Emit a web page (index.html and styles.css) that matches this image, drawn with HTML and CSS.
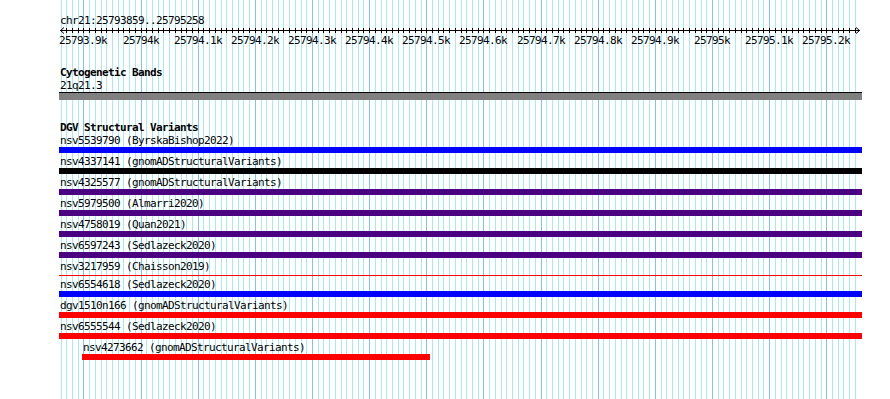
FILE: index.html
```html
<!DOCTYPE html>
<html>

<head>
	<title>chr21:25793859..25795258</title>
	<link rel="stylesheet" href="styles.css">
</head>

<body>
	<div class="browser">
		<div class="gridlines" id="gridlines"></div>
		<div class="tracks">
			<div class="locus">chr21:25793859..25795258</div>
			<svg class="ruler" id="ruler" width="803" height="8"></svg>
			<div class="ruler-labels" id="ruler-labels"></div>

			<div class="track track-bands">
				<div class="track-title">Cytogenetic Bands</div>
				<div class="feature-label">21q21.3</div>
				<div class="band"></div>
			</div>

			<div class="track track-dgv">
				<div class="track-title">DGV Structural Variants</div>
				<div class="feature">
					<div class="feature-label">nsv5539790 (ByrskaBishop2022)</div>
					<div class="feature-bar bar-blue"></div>
				</div>
				<div class="feature">
					<div class="feature-label">nsv4337141 (gnomADStructuralVariants)</div>
					<div class="feature-bar bar-black"></div>
				</div>
				<div class="feature">
					<div class="feature-label">nsv4325577 (gnomADStructuralVariants)</div>
					<div class="feature-bar bar-purple"></div>
				</div>
				<div class="feature">
					<div class="feature-label">nsv5979500 (Almarri2020)</div>
					<div class="feature-bar bar-purple"></div>
				</div>
				<div class="feature">
					<div class="feature-label">nsv4758019 (Quan2021)</div>
					<div class="feature-bar bar-purple"></div>
				</div>
				<div class="feature">
					<div class="feature-label">nsv6597243 (Sedlazeck2020)</div>
					<div class="feature-bar bar-purple"></div>
				</div>
				<div class="feature">
					<div class="feature-label">nsv3217959 (Chaisson2019)</div>
					<div class="feature-bar bar-line"></div>
				</div>
				<div class="feature">
					<div class="feature-label">nsv6554618 (Sedlazeck2020)</div>
					<div class="feature-bar bar-blue"></div>
				</div>
				<div class="feature">
					<div class="feature-label">dgv1510n166 (gnomADStructuralVariants)</div>
					<div class="feature-bar bar-red"></div>
				</div>
				<div class="feature">
					<div class="feature-label">nsv6555544 (Sedlazeck2020)</div>
					<div class="feature-bar bar-red"></div>
				</div>
				<div class="feature" style="margin-left: 23px; width: 348px;">
					<div class="feature-label">nsv4273662 (gnomADStructuralVariants)</div>
					<div class="feature-bar bar-red"></div>
				</div>
			</div>
		</div>
	</div>
	<script src="script.js"></script>
</body>

</html>
```

FILE: styles.css
```css
body {
	margin: 0;
	padding: 0;
	background-color: #fff;
	color: #000;
	font-family: "DejaVu Sans Mono", "Liberation Mono", monospace;
	font-size: 11px;
	letter-spacing: -0.62px;
	line-height: 12px;
}

.browser {
	position: relative;
	width: 890px;
	height: 399px;
	overflow: hidden;
}

/* grid lines sit behind the tracks */
.gridlines {
	position: absolute;
	top: 0;
	bottom: 0;
	left: 59px;
	width: 803px;
}

.gridline {
	position: absolute;
	top: 0;
	bottom: 0;
	width: 1px;
	background-color: #aae9f0;
}

.gridline-major {
	background-color: #84c2ec;
}

.tracks {
	position: relative;
	width: 803px;
	padding: 15px 0 0 59px;
}

.locus,
.feature-label {
	padding-left: 1px;
}

.ruler {
	display: block;
}

.ruler-labels {
	position: relative;
	height: 12px;
}

.ruler-label {
	position: absolute;
	top: 0;
	transform: translateX(-50%);
	white-space: nowrap;
}

.track-title {
	font-weight: bold;
	padding-left: 1px;
}

.feature-label {
	white-space: nowrap;
}

.track-bands {
	margin-top: 20px;
}

.track-bands .feature-label {
	margin-top: 1px;
}

.band {
	height: 7px;
	border-top: 1px solid #000;
	background-color: #808080;
}

.track-dgv {
	margin-top: 22px;
}

.track-dgv .track-title {
	margin-bottom: 1px;
}

.feature {
	margin-bottom: 3px;
}

.feature-bar {
	height: 6px;
}

.bar-blue {
	background-color: #0000ff;
}

.bar-black {
	background-color: #000;
}

.bar-purple {
	background-color: #4b0082;
}

.bar-red {
	background-color: #ff0000;
}

.bar-line {
	height: 1px;
	margin: 2px 0 3px;
	background-color: #ff0000;
}
```

FILE: script.js
```js
const start = 25793859;
const end = 25795258;
const scale = 800 / (end - start + 1);
const offset = 1;

const gridlines = document.querySelector('#gridlines');
const ruler = document.querySelector('#ruler');
const rulerLabels = document.querySelector('#ruler-labels');
const svgNS = 'http://www.w3.org/2000/svg';

const toX = (bp) => Math.round(offset + (bp - start) * scale);

const svgLine = (x1, y1, x2, y2) => {
	const line = document.createElementNS(svgNS, 'line');
	line.setAttribute('x1', x1);
	line.setAttribute('y1', y1);
	line.setAttribute('x2', x2);
	line.setAttribute('y2', y2);
	line.setAttribute('stroke', '#000');
	line.setAttribute('shape-rendering', 'crispEdges');
	ruler.appendChild(line);
};

// ruler axis with arrows at both ends
svgLine(1, 3.5, 801, 3.5);
const arrows = document.createElementNS(svgNS, 'path');
arrows.setAttribute('d', 'M5,0.5 L1.5,3.5 L5,6.5 M797,0.5 L800.5,3.5 L797,6.5');
arrows.setAttribute('stroke', '#000');
arrows.setAttribute('fill', 'none');
ruler.appendChild(arrows);

for (let bp = 25793860; bp <= end; bp += 10) {
	const x = toX(bp);

	const gridline = document.createElement('div');
	gridline.className = bp % 100 === 0 ? 'gridline gridline-major' : 'gridline';
	gridline.style.left = x + 'px';
	gridlines.appendChild(gridline);

	if (x > 4 && x < 797) {
		svgLine(x + 0.5, 1, x + 0.5, 6);
	}

	if (bp % 100 === 0) {
		const label = document.createElement('span');
		label.className = 'ruler-label';
		label.style.left = x + 'px';
		label.textContent = (bp / 1000).toFixed(1).replace(/\.0$/, '') + 'k';
		rulerLabels.appendChild(label);
	}
}
```
